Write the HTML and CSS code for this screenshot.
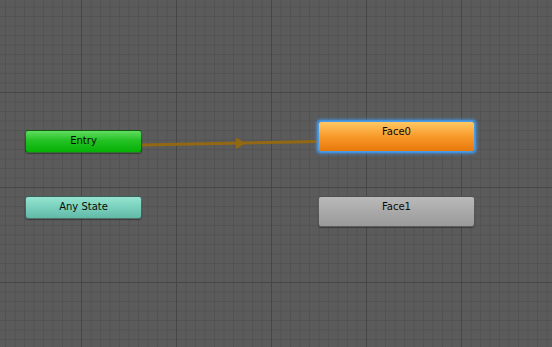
FILE: index.html
```html
<!DOCTYPE html>
<html>
<head>
<meta charset="utf-8">
<link rel="stylesheet" href="styles.css">
</head>
<body>
<div class="graph">
  <svg class="links" width="552" height="347" viewBox="0 0 552 347">
    <line x1="142" y1="145" x2="318" y2="141.5" class="link"/>
    <polygon points="236,137.8 246,143.3 236,148.8" class="arrow"/>
  </svg>
  <div class="node node-entry">Entry</div>
  <div class="node node-any">Any State</div>
  <div class="node node-state node-default">Face0</div>
  <div class="node node-state node-plain">Face1</div>
</div>
</body>
</html>
```
FILE: styles.css
```css
html, body {
  margin: 0;
  padding: 0;
  width: 552px;
  height: 347px;
  overflow: hidden;
}
.graph {
  position: relative;
  width: 552px;
  height: 347px;
  background-color: #5b5b5b;
  background-image:
    linear-gradient(to right, #474747 1px, transparent 1px),
    linear-gradient(to bottom, #474747 1px, transparent 1px),
    linear-gradient(to right, #535353 1px, transparent 1px),
    linear-gradient(to bottom, #535353 1px, transparent 1px);
  background-size: 95px 95px, 95px 95px, 9.5px 9.5px, 9.5px 9.5px;
  background-position: 81px 92px, 81px 92px, 81px 92px, 81px 92px;
  font-family: "DejaVu Sans", sans-serif;
  font-size: 10px;
  color: #0a0a0a;
}
.links {
  position: absolute;
  left: 0;
  top: 0;
}
.link {
  stroke: #936812;
  stroke-width: 3;
}
.arrow {
  fill: #936812;
}
.node {
  position: absolute;
  box-sizing: border-box;
  border: 1px solid rgba(20, 20, 20, 0.55);
  border-radius: 3px;
  text-align: center;
  line-height: 14px;
  box-shadow: 0 1px 1px rgba(0, 0, 0, 0.35);
}
.node-entry {
  left: 25px;
  top: 130px;
  width: 117px;
  height: 23px;
  padding-top: 3px;
  background: linear-gradient(to bottom, #62dc62 0%, #24c224 45%, #05b005 100%);
}
.node-any {
  left: 25px;
  top: 196px;
  width: 117px;
  height: 23px;
  padding-top: 3px;
  background: linear-gradient(to bottom, #95e4d0 0%, #78d0bc 50%, #62b9a8 100%);
}
.node-state {
  left: 318px;
  width: 157px;
  height: 31px;
  padding-top: 3px;
}
.node-default {
  top: 121px;
  background: linear-gradient(to bottom, #ffc862 0%, #f99a2c 50%, #e8780a 100%);
  border-color: #4d9be0;
  box-shadow: 0 0 0 1px #3f8fda, 0 0 3px 2px rgba(70, 150, 230, 0.7);
}
.node-plain {
  top: 196px;
  background: linear-gradient(to bottom, #bababa 0%, #a9a9a9 50%, #9a9a9a 100%);
}
```
